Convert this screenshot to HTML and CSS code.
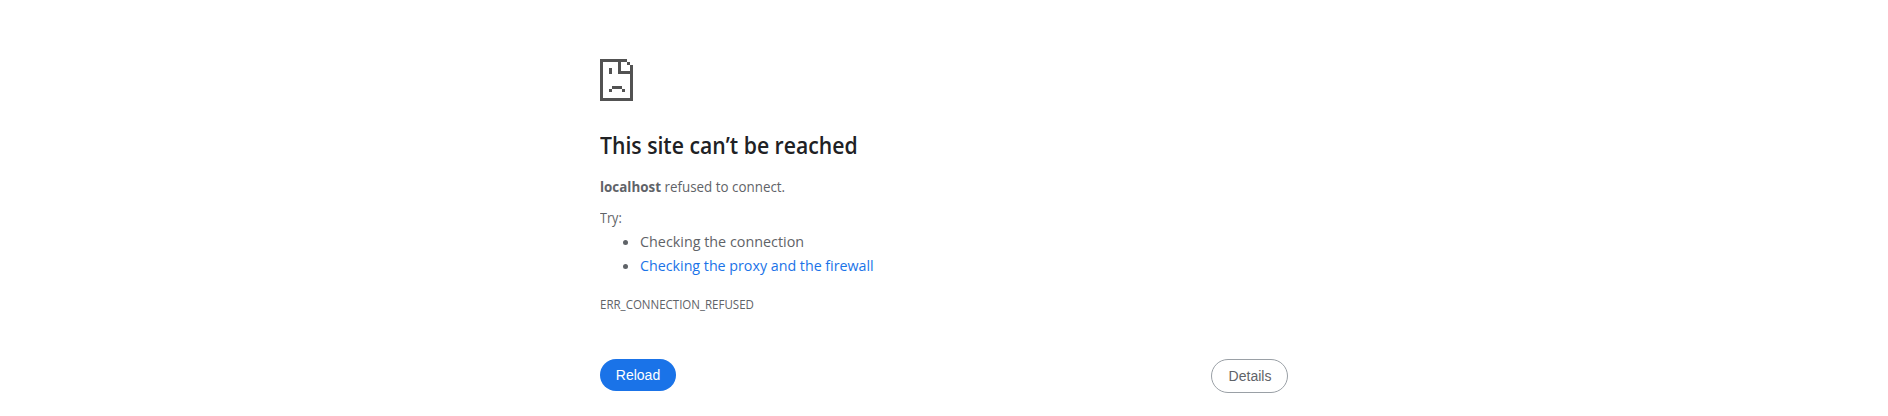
FILE: index.html
```html
<!DOCTYPE html>
<html lang="en">
<head>
<meta charset="utf-8">
<title>localhost</title>
<link rel="stylesheet" href="styles.css">
</head>
<body>
<main class="wrapper">
<svg class="icon" viewBox="0 0 72 72" shape-rendering="crispEdges"><path d="M0 1h27v3H3v36h27V16H18V4h3v9h9V7h3v36H0zM27 4h3v3h-3zM9 10h3v6H9zM12 28h10v3H12zM9 31h3v3H9zM22 31h3v3h-3z"/></svg>
<h1 class="title"><span class="fit fit-title">This site can’t be reached</span></h1>
<p class="summary"><span class="fit fit-summary"><strong>localhost</strong> refused to connect.</span></p>
<p class="try"><span class="fit fit-try">Try:</span></p>
<ul class="list">
<li><span class="fit fit-item">Checking the connection</span></li>
<li><a class="fit link">Checking the proxy and the firewall</a></li>
</ul>
<div class="code"><span class="fit fit-code">ERR_CONNECTION_REFUSED</span></div>
<div class="buttons"><button class="reload">Reload</button><button class="details">Details</button></div>
</main>
</body>
</html>
```
FILE: styles.css
```css
body{margin:0;background:#fff;color:#5f6368;font-family:"Open Sans","Noto Sans",sans-serif;font-size:15px}
.wrapper{width:688px;margin:0 auto;padding-top:58px}
.icon{display:block;width:72px;height:72px;fill:#525252}
.fit{display:inline-block;transform:scaleX(.95);transform-origin:left;white-space:nowrap}
.fit-title{transform:scaleX(.921)}
.fit-summary{transform:scaleX(.956)}
.fit-try{transform:scaleX(.9)}
.fit-item{transform:scaleX(.956)}
.fit-code{transform:scaleX(.959)}
.title{margin:0;font-size:23px;line-height:30px;font-weight:600;color:#202124}
.summary{margin:17px 0 0;font-size:14px;line-height:20px}
.try{margin:11px 0 0;font-size:14px;line-height:20px}
.list{margin:1px 0 0;padding-left:40px;line-height:24px}
.link{color:#1a73e8}
.code{margin-top:19px;font-size:12px;line-height:18px}
.buttons{display:flex;align-items:flex-start;justify-content:space-between;margin-top:45px}
.reload,.details{box-sizing:border-box;border-radius:20px;font:14px "Liberation Sans",sans-serif}
.reload{width:76px;height:32px;padding:0;border:0;background:#1a73e8;color:#fff}
.details{width:77px;height:34px;padding:0 0 0 1px;border:1px solid #9aa0a6;background:#fff;color:#5f6368}
```
